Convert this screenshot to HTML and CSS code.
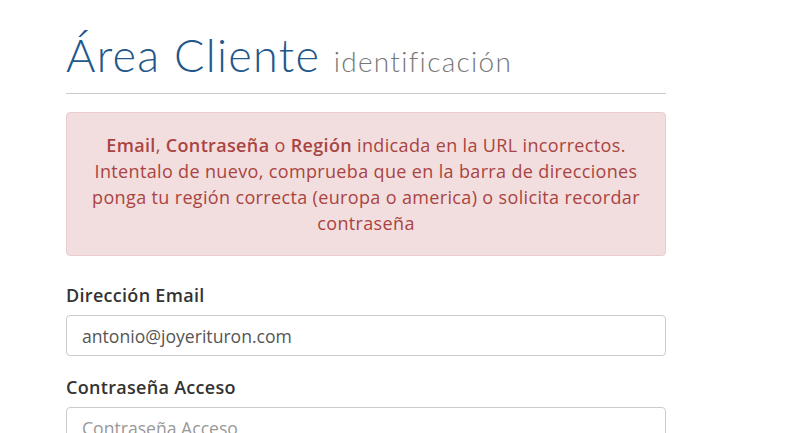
FILE: index.html
```html
<!DOCTYPE html>
<html lang="es">
<head>
<meta charset="utf-8">
<title>Área Cliente</title>
<link rel="stylesheet" href="styles.css">
</head>
<body>
<div class="page">
  <div class="header">
    <h1 class="title">Área Cliente <small class="sub">identificación</small></h1>
  </div>
  <div class="alert">
    <strong>Email</strong>, <strong>Contraseña</strong> o <strong>Región</strong> indicada en la URL incorrectos. Intentalo de nuevo, comprueba que en la barra de direcciones ponga tu región correcta (europa o america) o solicita recordar contraseña
  </div>
  <form class="form">
    <div class="group">
      <label class="label" for="email">Dirección Email</label>
      <input class="input" id="email" type="text" value="antonio@joyerituron.com">
    </div>
    <div class="group">
      <label class="label" for="pass">Contraseña Acceso</label>
      <input class="input" id="pass" type="password" placeholder="Contraseña Acceso">
    </div>
  </form>
</div>
</body>
</html>
```
FILE: styles.css
```css
html, body {
  margin: 0;
  padding: 0;
  background: #fff;
}
body {
  font-family: "Open Sans", "Liberation Sans", sans-serif;
  color: #333;
}
.page {
  width: 600px;
  margin-left: 66px;
  padding-top: 24px;
}
.header {
  border-bottom: 1px solid #ccc;
  padding-bottom: 1px;
}
.title {
  margin: 0;
  font-family: Lato, "Open Sans", sans-serif;
  font-weight: 300;
  font-size: 45px;
  line-height: 62px;
  letter-spacing: 1.3px;
  color: #22578c;
}
.sub {
  font-size: 28px;
  letter-spacing: 1.3px;
  color: #777;
  font-weight: 300;
}
.alert {
  margin-top: 18px;
  border: 1px solid #ebccd1;
  background: #f2dede;
  color: #a94442;
  border-radius: 4px;
  padding: 19px 16px;
  text-align: center;
  font-size: 18px;
  line-height: 26px;
  letter-spacing: 0.35px;
}
.alert strong {
  font-weight: 600;
}
.form {
  margin-top: 26px;
}
.group {
  margin-bottom: 18px;
}
.label {
  display: block;
  font-size: 18px;
  line-height: 26px;
  font-weight: 600;
  letter-spacing: 0.3px;
  color: #333;
  margin-bottom: 7px;
}
.input {
  display: block;
  box-sizing: border-box;
  width: 600px;
  height: 41px;
  margin: 0;
  padding: 0 15px;
  border: 1px solid #ccc;
  border-radius: 4px;
  font-family: "Open Sans", sans-serif;
  font-size: 17.6px;
  color: #555;
  background: #fff;
  outline: none;
}
.input::placeholder {
  color: #999;
}
```
